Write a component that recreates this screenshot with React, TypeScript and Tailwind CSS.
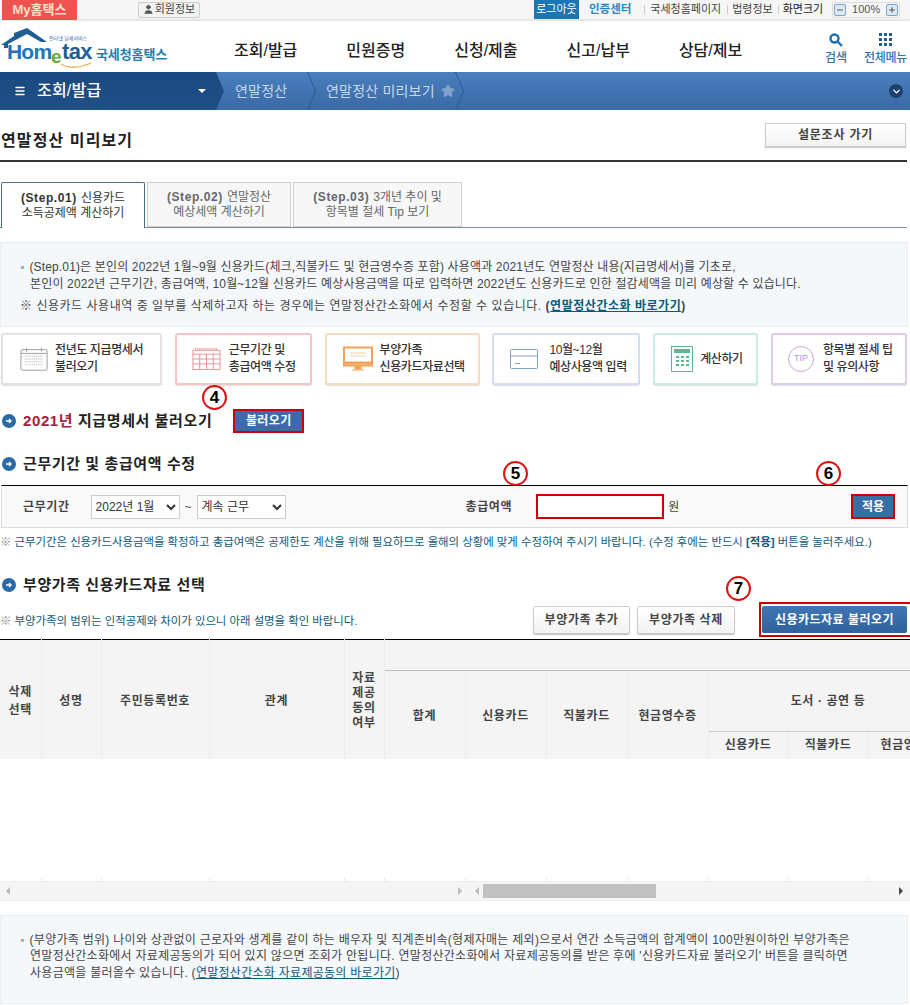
import React from 'react';
import { ChevronDown, Star, Menu, User, Plus, Minus } from 'lucide-react';

const NAV = ['조회/발급', '민원증명', '신청/제출', '신고/납부', '상담/제보'];

const TABS = [
  { step: '(Step.01)', a: '신용카드', b: '소득공제액 계산하기', w: 'w-[144px]', active: true },
  { step: '(Step.02)', a: '연말정산', b: '예상세액 계산하기', w: 'w-[144px]', active: false },
  { step: '(Step.03)', a: '3개년 추이 및', b: '항목별 절세 Tip 보기', w: 'w-[169px]', active: false },
];

function CalendarIcon() {
  return (
    <svg width="28" height="26" viewBox="0 0 30 26" fill="none">
      <rect x="1" y="3" width="28" height="22" rx="1.5" stroke="#9a9a9a" />
      <path d="M1 7h28" stroke="#9a9a9a" />
      <path d="M7 1v4M23 1v4" stroke="#9a9a9a" />
      <path d="M5 10h20M5 13h20M5 16h20M5 19h20" stroke="#c4c4c4" strokeWidth="1.5" strokeDasharray="1 1" />
    </svg>
  );
}

function GridCalendarIcon() {
  return (
    <svg width="29" height="24" viewBox="0 0 30 24" fill="none" stroke="#ef8f8f">
      <rect x="1" y="3" width="28" height="20" />
      <path d="M1 7h28M1 12h28M1 17h28M8 7v16M15 7v16M22 7v16" />
      <path d="M3 1.5h24" strokeWidth="2" strokeDasharray="1 1" />
    </svg>
  );
}

function MonitorIcon() {
  return (
    <svg width="30" height="26" viewBox="0 0 30 26" fill="none">
      <rect x="1" y="1.5" width="28" height="18" fill="#fff" stroke="#f3a25b" strokeWidth="2" />
      <path d="M1 17h28" stroke="#f3a25b" strokeWidth="3" />
      <path d="M7 7h16M7 10h16" stroke="#f8cfa3" />
      <path d="M12 20h6v3h-6zM9 24h12" fill="#f3a25b" stroke="#f3a25b" />
    </svg>
  );
}

function CardIcon() {
  return (
    <svg width="28" height="20" viewBox="0 0 28 20" fill="none" stroke="#7fa3c9">
      <rect x="0.5" y="0.5" width="27" height="19" rx="1" />
      <path d="M0.5 7h27" />
      <path d="M5 14.5h5" />
    </svg>
  );
}

function CalcIcon() {
  return (
    <svg width="22" height="26" viewBox="0 0 22 26" fill="none">
      <rect x="0.5" y="0.5" width="21" height="25" stroke="#5cb88f" />
      <rect x="3" y="3" width="16" height="4" fill="#5cb88f" />
      <path d="M5 11h3M10 11h3M15 11h3M5 15h3M10 15h3M15 15h3M5 19h3M10 19h3M15 19h3" stroke="#5cb88f" strokeWidth="2" />
    </svg>
  );
}

function TipIcon() {
  return (
    <div className="flex h-[26px] w-[26px] items-center justify-center rounded-full border border-[#c7a6e0] text-[9px] text-[#c08fe0]">
      TIP
    </div>
  );
}

const STEPS = [
  { icon: <CalendarIcon />, a: '전년도 지급명세서', b: '불러오기', w: 'w-[161px]', gap: 'gap-[7px] pl-[17px]', border: 'border-[#e2e2e2]' },
  { icon: <GridCalendarIcon />, a: '근무기간 및', b: '총급여액 수정', w: 'w-[137px]', gap: 'gap-[8px] pl-[15px]', border: 'border-[#f4c6c6]' },
  { icon: <MonitorIcon />, a: '부양가족', b: '신용카드자료선택', w: 'w-[155px]', gap: 'gap-[7px] pl-[16px]', border: 'border-[#f9dcc0]' },
  { icon: <CardIcon />, a: '10월~12월', b: '예상사용액 입력', w: 'w-[148px]', gap: 'gap-[11px] pl-[16px]', border: 'border-[#d3dff0]' },
  { icon: <CalcIcon />, b: '계산하기', w: 'w-[105px]', gap: 'gap-[7px] pl-[16px]', border: 'border-[#c9eedd]' },
  { icon: <TipIcon />, a: '항목별 절세 팁', b: '및 유의사항', w: 'w-[136px]', gap: 'gap-[9px] pl-[15px]', border: 'border-[#dccdea]' },
];

function Bullet() {
  return (
    <span className="flex h-[14px] w-[14px] shrink-0 items-center justify-center rounded-full bg-[#2a6ba5]">
      <svg width="8" height="8" viewBox="0 0 8 8" fill="none" stroke="#fff" strokeWidth="1.3">
        <path d="M1 4h5M4 2l2 2-2 2" />
      </svg>
    </span>
  );
}

function Mark({ n, className }: { n: number; className: string }) {
  return (
    <span className={`absolute flex h-[25px] w-[25px] items-center justify-center rounded-full border-2 border-[#d11] bg-white text-[17px] font-bold text-black ${className}`}>
      {n}
    </span>
  );
}

function Th({ children, rowSpan, colSpan, className = '' }: { children?: React.ReactNode; rowSpan?: number; colSpan?: number; className?: string }) {
  return (
    <th rowSpan={rowSpan} colSpan={colSpan} className={`border-r border-[#ececec] bg-[#f4f4f4] p-0 text-center align-middle text-[12px] font-bold tracking-[0.6px] text-[#444] ${rowSpan ? 'pt-[3px]' : ''} ${className}`}>
      {children}
    </th>
  );
}

const COLS = [41, 60, 108, 135, 40, 81, 81, 81, 81, 80, 80, 80];

export default function App() {
  return (
    <div className="relative h-[1005px] w-[910px] overflow-hidden bg-white font-['Liberation_Sans','Noto_Sans_CJK_KR',sans-serif] text-[12px] text-[#333]">
      {/* top bar */}
      <div className="flex h-[21px] items-center border-b-2 border-[#e6e6e6] bg-[#f6f6f6]">
        <div className="ml-[2px] flex h-[21px] w-[75px] items-center justify-center bg-[#ef5350] text-[13px] font-bold text-[#fde0c8]">My홈택스</div>
        <div className="ml-[61px] flex h-[16px] w-[62px] items-center justify-center gap-[1px] rounded-[2px] border border-[#ccc] bg-[#f2f2f2] text-[11px] text-[#444]">
          <User size={11} fill="#555" stroke="#555" />
          회원정보
        </div>
        <div className="ml-[334px] flex h-[19px] w-[45px] items-center justify-center bg-[#1a76b5] text-[11px] text-white">로그아웃</div>
        <div className="ml-[10px] text-[11.5px] font-bold text-[#2a85c0]">인증센터</div>
        <span className="ml-[13px] h-[9px] w-px bg-[#ccc]" />
        <div className="ml-[5px] text-[11px] text-[#444]">국세청홈페이지</div>
        <span className="ml-[6px] h-[9px] w-px bg-[#ccc]" />
        <div className="ml-[4px] text-[11px] text-[#444]">법령정보</div>
        <span className="ml-[5px] h-[9px] w-px bg-[#ccc]" />
        <div className="ml-[4px] text-[11px] text-[#222]">화면크기</div>
        <div className="ml-[9px] flex h-[16px] w-[68px] items-center justify-between rounded-[2px] border border-[#ddd] px-[1px] text-[11px] text-[#555]">
          <span className="flex h-[12px] w-[12px] items-center justify-center rounded-[2px] border border-[#7fa3c9] bg-[#dce8f4]"><Minus size={8} strokeWidth={3} /></span>
          100%
          <span className="flex h-[12px] w-[12px] items-center justify-center rounded-[2px] border border-[#7fa3c9] bg-[#dce8f4]"><Plus size={8} strokeWidth={3} /></span>
        </div>
      </div>

      {/* header */}
      <div className="flex h-[51px] items-center">
        <svg width="172" height="48" viewBox="0 0 172 48" className="ml-[1px] shrink-0">
          <path d="M0 22 L13 13 L13 10 L26 5 L46 19 L40 19 L26 11 L7 21 L7 25 L3 25 L3 22 Z" fill="#1f5f94" />
          <text x="6" y="36" fontSize="21" fontWeight="700" fill="#1b75b8" letterSpacing="-0.8">Hom</text>
          <text x="50" y="40" fontSize="19" fontWeight="700" fill="#6aa83c">e</text>
          <text x="61" y="36" fontSize="22" fontWeight="700" fill="#1f5f94" letterSpacing="-0.6">tax</text>
          <path d="M60 41 Q 72 48 90 40" stroke="#e8b14a" strokeWidth="1.3" fill="none" />
          <text x="48" y="17" fontSize="5" fill="#1f5f94">인터넷 납세서비스</text>
          <text x="95" y="36" fontSize="13" fontWeight="700" fill="#1f7fb0" letterSpacing="-0.1">국세청홈택스</text>
        </svg>
        <nav className="ml-[61px] mt-[8px] flex gap-[49px] text-[16px] font-medium text-[#222]">
          {NAV.map(n => <span key={n} className="whitespace-nowrap">{n}</span>)}
        </nav>
        <div className="ml-auto mt-[6px] flex flex-col items-center text-[12px] font-medium text-[#2a75b0]">
          <svg width="14" height="14" viewBox="0 0 14 14" fill="none" stroke="#1f6fae" strokeWidth="2.4">
            <circle cx="5.5" cy="5.5" r="4" />
            <path d="M8.5 8.5l4.5 4.5" />
          </svg>
          <span className="mt-[2px]">검색</span>
        </div>
        <div className="ml-[17px] mr-[3px] mt-[6px] flex flex-col items-center text-[12px] font-medium tracking-[-0.3px] text-[#2a75b0]">
          <svg width="13" height="13" viewBox="0 0 13 13" fill="#1f5f94">
            {[0, 5, 10].flatMap(x => [0, 5, 10].map(y => <rect key={`${x}-${y}`} x={x} y={y} width="3" height="3" />))}
          </svg>
          <span className="mt-[3px] whitespace-nowrap">전체메뉴</span>
        </div>
      </div>

      {/* breadcrumb */}
      <div className="flex h-[38px] items-center bg-gradient-to-b from-[#4a7fbd] to-[#3a6aa6] text-[14px] tracking-[0.2px] text-[#c6d8ee]">
        <div className="flex h-full w-[224px] items-center bg-gradient-to-b from-[#1c4a80] to-[#1f4f86] [clip-path:polygon(0_0,216px_0,224px_50%,216px_100%,0_100%)]">
          <Menu size={12} strokeWidth={3} className="ml-[14px] text-white" />
          <span className="ml-[11px] text-[16px] font-medium text-white">조회/발급</span>
          <span className="ml-[97px] h-0 w-0 border-x-[4px] border-t-[4px] border-x-transparent border-t-white" />
        </div>
        <span className="ml-[11px] w-[72px] whitespace-nowrap">연말정산</span>
        <svg width="9" height="38" viewBox="0 0 9 38" fill="none" stroke="#2a5a94"><path d="M0.5 0l8 19-8 19" /></svg>
        <span className="ml-[10px] whitespace-nowrap">연말정산 미리보기</span>
        <Star size={14} fill="#7fa3cc" stroke="#7fa3cc" className="ml-[6px]" />
        <svg width="9" height="38" viewBox="0 0 9 38" fill="none" stroke="#2a5a94"><path d="M0.5 0l8 19-8 19" /></svg>
        <span className="ml-auto mr-[7px] flex h-[14px] w-[14px] items-center justify-center rounded-full bg-[#1c3f6c]">
          <ChevronDown size={11} strokeWidth={3} className="text-white" />
        </span>
      </div>

      {/* title */}
      <div className="mr-[3px] flex h-[52px] items-center justify-between border-b-2 border-[#333] pb-[2px]">
        <h1 className="ml-[1px] mt-[14px] text-[16px] font-bold tracking-[1.1px] text-[#222]">연말정산 미리보기</h1>
        <button className="mr-[1px] mt-[2px] h-[24px] w-[141px] border border-[#ccc] bg-gradient-to-b from-white to-[#f2f2f2] text-[12px] font-bold tracking-[0.8px] text-[#444] shadow-[0_1px_1px_#ccc]">설문조사 가기</button>
      </div>

      {/* step tabs */}
      <div className="mr-[3px] mt-[20px] flex h-[46px] gap-[2px] border-b border-[#7c8fa0] pl-[1px]">
        {TABS.map(t => (
          <div
            key={t.step}
            className={`${t.w} flex flex-col items-center justify-center leading-[15px] ${t.active ? 'mb-[-1px] rounded-t-[2px] border border-b-0 border-[#4a6d85] bg-white text-[#333]' : 'border border-[#cfcfcf] bg-[#f7f7f7] text-[#666]'}`}
          >
            <div><b className="mr-[4px] tracking-[0.6px]">{t.step}</b>{t.a}</div>
            <div>{t.b}</div>
          </div>
        ))}
      </div>

      {/* info */}
      <div className="mr-[2px] mt-[14px] flex h-[85px] flex-col justify-center border border-[#e8eef4] bg-[#f4f8fb] pl-[19px] pt-[5px] text-[12px] text-[#444]">
        <p className="whitespace-nowrap leading-[17px] tracking-[0.15px]"><span className="mr-[5px] text-[#aaa]">▪</span>(Step.01)은 본인의 2022년 1월~9월 신용카드(체크,직불카드 및 현금영수증 포함) 사용액과 2021년도 연말정산 내용(지급명세서)를 기초로,</p>
        <p className="whitespace-nowrap pl-[10px] leading-[17px] tracking-[0.15px]">본인이 2022년 근무기간, 총급여액, 10월~12월 신용카드 예상사용금액을 따로 입력하면 2022년도 신용카드로 인한 절감세액을 미리 예상할 수 있습니다.</p>
        <p className="mt-[5px] whitespace-nowrap leading-[17px] tracking-[0.53px]">※ 신용카드 사용내역 중 일부를 삭제하고자 하는 경우에는 연말정산간소화에서 수정할 수 있습니다. <b>(<span className="text-[#0b5a7a] underline">연말정산간소화 바로가기</span>)</b></p>
      </div>

      {/* process steps */}
      <div className="mt-[6px] flex justify-between pl-[1px] pr-[3px]">
        {STEPS.map(s => (
          <div key={s.b} className={`${s.w} ${s.gap} ${s.border} flex h-[52px] items-center rounded-[3px] border-2 bg-white shadow-[0_1px_1px_#ddd]`}>
            {s.icon}
            <div className="whitespace-nowrap text-[12px] font-medium leading-[17px] tracking-[-0.4px] text-[#333]">
              {s.a && <div>{s.a}</div>}
              <div>{s.b}</div>
            </div>
          </div>
        ))}
      </div>

      {/* 2021 statement */}
      <div className="mt-[24px] flex h-[24px] items-center pl-[2px]">
        <Bullet />
        <h2 className="ml-[7px] text-[15px] font-bold tracking-[0.6px] text-[#222]"><span className="text-[#a3223f]">2021년</span> 지급명세서 불러오기</h2>
        <button className="ml-[21px] h-[24px] w-[71px] border-2 border-[#c00] bg-[#3a6da8] text-[12px] font-bold tracking-[0.4px] text-white">불러오기</button>
      </div>

      {/* work period */}
      <div className="mt-[24px] flex h-[14px] items-center pl-[2px]">
        <Bullet />
        <h2 className="ml-[7px] text-[15px] font-bold tracking-[0.6px] text-[#222]">근무기간 및 총급여액 수정</h2>
      </div>
      <div className="ml-[1px] mr-[2px] mt-[14px] flex h-[43px] items-center border border-t-black border-x-[#ddd] border-b-[#ddd] bg-[#f9f9f9]">
        <span className="ml-[21px] font-bold tracking-[0.6px] text-[#444]">근무기간</span>
        <select className="ml-[21px] h-[24px] w-[89px] border border-[#ccc] bg-white text-[12px] text-[#333]"><option>2022년 1월</option></select>
        <span className="mx-[5px] text-[#555]">~</span>
        <select className="h-[24px] w-[89px] border border-[#ccc] bg-white text-[12px] text-[#333]"><option>계속 근무</option></select>
        <span className="ml-[180px] font-bold tracking-[0.6px] text-[#444]">총급여액</span>
        <input className="ml-[24px] h-[25px] w-[128px] border-2 border-[#d00000] bg-white" />
        <span className="ml-[4px] text-[#444]">원</span>
        <button className="ml-auto mr-[12px] h-[25px] w-[44px] border-2 border-[#c00] bg-[#3a6da8] text-[12px] font-bold text-white">적용</button>
      </div>
      <p className="mt-[7px] whitespace-nowrap text-[11.4px] leading-[14px] text-[#0f5a78]">
        <span className="text-[#888]">※</span> 근무기간은 신용카드사용금액을 확정하고 총급여액은 공제한도 계산을 위해 필요하므로 올해의 상황에 맞게 수정하여 주시기 바랍니다. (수정 후에는 반드시 <b>[적용]</b> 버튼을 눌러주세요.)
      </p>

      {/* dependants */}
      <div className="mt-[29px] flex h-[14px] items-center pl-[2px]">
        <Bullet />
        <h2 className="ml-[7px] text-[15px] font-bold tracking-[0.6px] text-[#222]">부양가족 신용카드자료 선택</h2>
      </div>
      <div className="mt-[10px] flex h-[35px] items-center">
        <p className="mt-[4px] w-[533px] whitespace-nowrap text-[11.4px] text-[#0f5a78]"><span className="text-[#888]">※</span> 부양가족의 범위는 인적공제와 차이가 있으니 아래 설명을 확인 바랍니다.</p>
        <button className="mt-[1px] h-[28px] w-[97px] rounded-[2px] border border-[#ccc] bg-gradient-to-b from-white to-[#f2f2f2] font-bold tracking-[0.6px] text-[#444] shadow-[0_1px_1px_#bbb]">부양가족 추가</button>
        <button className="ml-[7px] mt-[1px] h-[28px] w-[98px] rounded-[2px] border border-[#ccc] bg-gradient-to-b from-white to-[#f2f2f2] font-bold tracking-[0.6px] text-[#444] shadow-[0_1px_1px_#bbb]">부양가족 삭제</button>
        <div className="ml-[24px] flex h-[35px] w-[151px] items-center border-2 border-r-0 border-[#d00000] pl-[1px]">
          <button className="h-[27px] w-[145px] whitespace-nowrap rounded-[2px] bg-gradient-to-b from-[#4076b4] to-[#2f629c] font-bold tracking-[0.5px] text-white">신용카드자료 불러오기</button>
        </div>
      </div>

      {/* table */}
      <div className="mt-[2px] h-[242px] overflow-hidden">
        <table className="table-fixed border-collapse border-t border-black" style={{ width: COLS.reduce((a, b) => a + b, 0) }}>
          <colgroup>
            {COLS.map((w, i) => <col key={i} style={{ width: w }} />)}
          </colgroup>
          <thead>
            <tr className="h-[31px]">
              <Th rowSpan={3}>삭제<br />선택</Th>
              <Th rowSpan={3}>성명</Th>
              <Th rowSpan={3}>주민등록번호</Th>
              <Th rowSpan={3}>관계</Th>
              <Th rowSpan={3} className="leading-[15px]">자료<br />제공<br />동의<br />여부</Th>
              <Th colSpan={7} className="border-b border-b-[#bbb] !text-right"><span className="mr-[-1px]">신용</span></Th>
            </tr>
            <tr className="h-[61px]">
              <Th rowSpan={2}>합계</Th>
              <Th rowSpan={2}>신용카드</Th>
              <Th rowSpan={2}>직불카드</Th>
              <Th rowSpan={2}>현금영수증</Th>
              <Th colSpan={3} className="border-b border-b-[#ccc]">도서 · 공연 등</Th>
            </tr>
            <tr className="h-[27px]">
              <Th>신용카드</Th>
              <Th>직불카드</Th>
              <Th className="whitespace-nowrap !text-left"><span className="ml-[12px]">현금영수증</span></Th>
            </tr>
          </thead>
          <tbody>
            <tr className="h-[119px]">
              {COLS.map((_, i) => <td key={i} />)}
            </tr>
            <tr className="h-[3px]">
              {COLS.map((_, i) => <td key={i} className="border-r border-[#e8e8e8]" />)}
            </tr>
          </tbody>
        </table>
      </div>

      {/* horizontal scroll */}
      <div className="flex h-[20px] items-center border-y border-[#eee] bg-[#f5f5f5] text-[#aaa]">
        <span className="ml-[6px] h-0 w-0 border-y-[4px] border-r-[4px] border-y-transparent border-r-[#bbb]" />
        <span className="ml-[448px] h-0 w-0 border-y-[4px] border-l-[4px] border-y-transparent border-l-[#bbb]" />
        <span className="ml-[13px] h-0 w-0 border-y-[4px] border-r-[4px] border-y-transparent border-r-[#bbb]" />
        <span className="ml-[4px] h-[14px] w-[173px] bg-[#c1c1c1]" />
        <span className="ml-auto mr-[7px] h-0 w-0 border-y-[4px] border-l-[4px] border-y-transparent border-l-[#444]" />
      </div>

      {/* dependants info */}
      <div className="mr-[2px] mt-[14px] flex h-[89px] flex-col justify-center border border-[#e8eef4] bg-[#f4f8fb] pb-[6px] pl-[19px] text-[12px] leading-[16.5px] tracking-[0.28px] text-[#444]">
        <p className="whitespace-nowrap"><span className="mr-[5px] text-[#aaa]">▪</span>(부양가족 범위) 나이와 상관없이 근로자와 생계를 같이 하는 배우자 및 직계존비속(형제자매는 제외)으로서 연간 소득금액의 합계액이 100만원이하인 부양가족은</p>
        <p className="whitespace-nowrap pl-[10px]">연말정산간소화에서 자료제공동의가 되어 있지 않으면 조회가 안됩니다. 연말정산간소화에서 자료제공동의를 받은 후에 '신용카드자료 불러오기' 버튼을 클릭하면</p>
        <p className="whitespace-nowrap pl-[10px]">사용금액을 불러올수 있습니다. (<span className="text-[#0b5a7a] underline">연말정산간소화 자료제공동의 바로가기</span>)</p>
      </div>

      {/* numbered annotations */}
      <Mark n={4} className="left-[202px] top-[385px]" />
      <Mark n={5} className="left-[503px] top-[461px]" />
      <Mark n={6} className="left-[816px] top-[461px]" />
      <Mark n={7} className="left-[726px] top-[576px]" />
    </div>
  );
}
